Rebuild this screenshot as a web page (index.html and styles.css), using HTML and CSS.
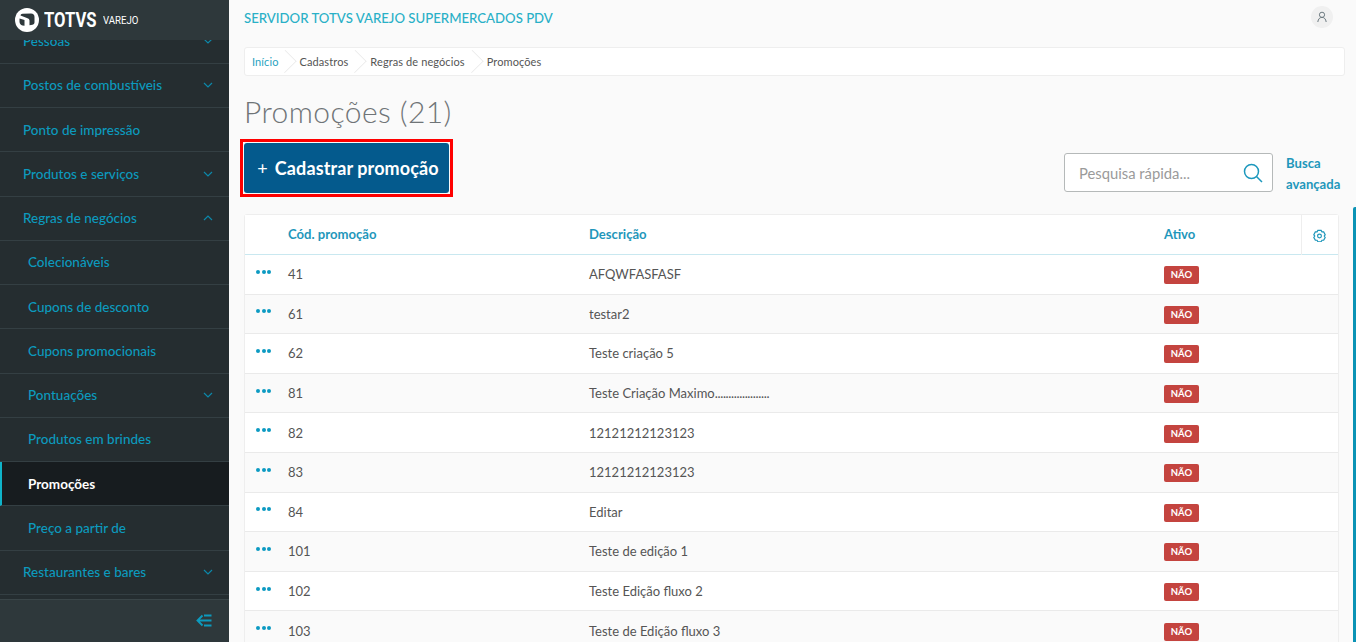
FILE: index.html
```html
<!DOCTYPE html>
<html lang="pt-BR">
<head>
<meta charset="utf-8">
<title>Promoções</title>
<link rel="stylesheet" href="styles.css">
</head>
<body>
<div class="app">
  <aside class="sidebar">
    <div class="brand">
      <svg class="logo" width="26" height="26" viewBox="0 0 26 26"><circle cx="13" cy="13" r="12" fill="#fff"/><path d="M6.500 8.500Q6.500 7 8.500 6.800L17 6.400Q20.500 6.600 20.500 10V15.500Q20.500 17.500 18.500 17.800L15.500 18.200 15.500 13.500Q15.500 11.800 13.500 11.300Z" fill="#2e383b"/><path d="M5.500 11.500 10.500 13V18.800L8.500 18.500Q5.500 17.500 5.500 14.500Z" fill="#2e383b"/></svg>
      <span class="brand-name">TOTVS</span><span class="brand-sub">VAREJO</span>
    </div>
    <nav class="menu">
      <ul class="menu-list">
        <li class="item"><span>Pessoas</span><svg class="chev" viewBox="0 0 10 6"><path d="M1 1l4 4 4-4"/></svg></li>
        <li class="item"><span>Postos de combustíveis</span><svg class="chev" viewBox="0 0 10 6"><path d="M1 1l4 4 4-4"/></svg></li>
        <li class="item"><span>Ponto de impressão</span></li>
        <li class="item"><span>Produtos e serviços</span><svg class="chev" viewBox="0 0 10 6"><path d="M1 1l4 4 4-4"/></svg></li>
        <li class="item"><span>Regras de negócios</span><svg class="chev" viewBox="0 0 10 6"><path d="M1 5l4-4 4 4"/></svg></li>
        <li class="item sub"><span>Colecionáveis</span></li>
        <li class="item sub"><span>Cupons de desconto</span></li>
        <li class="item sub"><span>Cupons promocionais</span></li>
        <li class="item sub"><span>Pontuações</span><svg class="chev" viewBox="0 0 10 6"><path d="M1 1l4 4 4-4"/></svg></li>
        <li class="item sub"><span>Produtos em brindes</span></li>
        <li class="item sub active"><span>Promoções</span></li>
        <li class="item sub"><span>Preço a partir de</span></li>
        <li class="item"><span>Restaurantes e bares</span><svg class="chev" viewBox="0 0 10 6"><path d="M1 1l4 4 4-4"/></svg></li>
      </ul>
    </nav>
    <div class="side-foot">
      <svg class="collapse" width="16" height="13" viewBox="0 0 16 13"><path d="M6.500 1.500 1.500 6.500l5 5M2 6.500h13.500M8 1.500h7.500M8 11.500h7.500"/></svg>
    </div>
  </aside>
  <main class="main">
    <header class="topbar">
      <span class="server">SERVIDOR TOTVS VAREJO SUPERMERCADOS PDV</span>
      <span class="avatar"><svg width="12" height="12" viewBox="0 0 12 12"><circle cx="6" cy="3.800" r="2.600"/><path d="M1.800 11c.4-3 1.900-4.600 4.200-4.600s3.800 1.600 4.200 4.600"/></svg></span>
    </header>
    <div class="crumbs">
      <span class="crumb first">Início</span>
      <span class="crumb">Cadastros</span>
      <span class="crumb">Regras de negócios</span>
      <span class="crumb last">Promoções</span>
    </div>
    <h1 class="title">Promoções (21)</h1>
    <div class="actions">
      <div class="btn-frame"><button class="btn"><span class="plus">+</span>Cadastrar promoção</button></div>
      <div class="search-wrap">
        <div class="search">
          <span class="ph">Pesquisa rápida...</span>
          <svg width="20" height="20" viewBox="0 0 20 20"><circle cx="8.500" cy="8.500" r="7"/><path d="M13.500 13.500 19 19"/></svg>
        </div>
        <a class="adv">Busca<br>avançada</a>
      </div>
    </div>
    <section class="table">
      <div class="row head">
        <span></span><span>Cód. promoção</span><span>Descrição</span><span>Ativo</span>
        <span class="gear"><svg width="13" height="13" viewBox="0 0 24 24"><path d="M9 2.500h6l1.500 2.800 3.200.1 2.800 5.100-1.700 2.500 1.700 2.600-2.800 5-3.200.1L15 23.500H9l-1.500-2.800-3.200-.1-2.800-5 1.700-2.600-1.700-2.500 2.800-5.100 3.200-.1z"/><circle cx="12" cy="13" r="3.500"/></svg></span>
      </div>
      <div class="row"><span class="dots"><i></i><i></i><i></i></span><span>41</span><span>AFQWFASFASF</span><span><b class="tag">NÃO</b></span><span></span></div>
      <div class="row"><span class="dots"><i></i><i></i><i></i></span><span>61</span><span>testar2</span><span><b class="tag">NÃO</b></span><span></span></div>
      <div class="row"><span class="dots"><i></i><i></i><i></i></span><span>62</span><span>Teste criação 5</span><span><b class="tag">NÃO</b></span><span></span></div>
      <div class="row"><span class="dots"><i></i><i></i><i></i></span><span>81</span><span>Teste Criação Maximo<span class="tight">....................</span></span><span><b class="tag">NÃO</b></span><span></span></div>
      <div class="row"><span class="dots"><i></i><i></i><i></i></span><span>82</span><span>12121212123123</span><span><b class="tag">NÃO</b></span><span></span></div>
      <div class="row"><span class="dots"><i></i><i></i><i></i></span><span>83</span><span>12121212123123</span><span><b class="tag">NÃO</b></span><span></span></div>
      <div class="row"><span class="dots"><i></i><i></i><i></i></span><span>84</span><span>Editar</span><span><b class="tag">NÃO</b></span><span></span></div>
      <div class="row"><span class="dots"><i></i><i></i><i></i></span><span>101</span><span>Teste de edição 1</span><span><b class="tag">NÃO</b></span><span></span></div>
      <div class="row"><span class="dots"><i></i><i></i><i></i></span><span>102</span><span>Teste Edição fluxo 2</span><span><b class="tag">NÃO</b></span><span></span></div>
      <div class="row"><span class="dots"><i></i><i></i><i></i></span><span>103</span><span>Teste de Edição fluxo 3</span><span><b class="tag">NÃO</b></span><span></span></div>
    </section>
  </main>
  <div class="scroll-thumb"></div>
</div>
</body>
</html>
```

FILE: styles.css
```css
* { box-sizing: border-box; }
html, body { margin: 0; height: 100%; overflow: hidden; }
body { font-family: "Lato", "Noto Sans", sans-serif; background: #fafafa; color: #4a4a4a; }

.app { display: flex; height: 642px; overflow: hidden; position: relative; }

.sidebar { width: 229px; flex: none; display: flex; flex-direction: column; background: #252d30; }
.brand { height: 40px; flex: none; background: #2e383b; display: flex; align-items: center; padding-left: 14px; color: #fff; position: relative; z-index: 1; }
.logo { flex: none; margin-right: 4px; }
.brand-name { font: 700 20px/1 "Roboto", sans-serif; transform: scaleX(.83); transform-origin: left; width: 52px; flex: none; }
.brand-sub { font: 400 10.500px/1 "Roboto", sans-serif; margin-left: 7px; margin-top: 2px; transform: scaleX(.92); transform-origin: left; }

.menu { flex: 1; overflow: hidden; min-height: 0; }
.menu-list { list-style: none; margin: -20.500px 0 0; padding: 0; }
.item { height: 44.250px; display: flex; align-items: center; justify-content: space-between; padding: 0 16px 0 23px; border-bottom: 1px solid #343f43; color: #0c9abe; font-size: 13.500px; font-weight: 500; }
.item.sub { padding-left: 28px; }
.item.active { background: #171c1f; color: #fff; font-weight: 700; border-left: 2px solid #0fb3c9; padding-left: 26px; }
.chev { width: 10px; height: 6px; fill: none; stroke: #0c88aa; stroke-width: 1.200; }

.side-foot { height: 43px; flex: none; background: #2e383b; border-top: 1px solid #3a4548; display: flex; align-items: center; justify-content: flex-end; padding: 0 17px 2px 0; }
.collapse { fill: none; stroke: #0c9abe; stroke-width: 1.900; }

.main { flex: 1; min-width: 0; padding: 0 11px 0 15px; }
.topbar { height: 47px; display: flex; align-items: center; justify-content: space-between; padding-bottom: 11px; }
.server { color: #29b0c7; font-size: 13.200px; font-weight: 500; }
.avatar { width: 22px; height: 22px; border-radius: 50%; background: #f0f0f0; display: flex; align-items: center; justify-content: center; margin-bottom: 3px; margin-right: 12px; }
.avatar svg { fill: none; stroke: #6d7a80; stroke-width: 1; }

.crumbs { height: 29px; background: #fff; border: 1px solid #eee; border-radius: 3px; display: flex; align-items: stretch; font-size: 11px; letter-spacing: .1px; color: #555; overflow: hidden; }
.crumb { display: flex; align-items: center; padding: 0 11px; position: relative; }
.crumb::after { content: ""; position: absolute; right: -6px; top: 3px; width: 19px; height: 20px; transform: rotate(45deg) scale(.8); border-top: 1px solid #e9e9e9; border-right: 1px solid #e9e9e9; }
.crumb.last::after { display: none; }
.crumb.first { color: #29a3bf; padding-left: 7px; padding-right: 10px; }

.title { margin: 15px 0 0; font-size: 30px; line-height: 40px; font-weight: 300; color: #6f7477; letter-spacing: .42px; }

.actions { display: flex; justify-content: space-between; align-items: flex-start; margin-top: 8px; margin-left: -4px; }
.btn-frame { border: 3px solid #f00; padding: 1px; height: 58px; flex: none; }
.btn { height: 50px; width: 205px; border: 0; border-radius: 3px; background: #045a8d; color: #fff; font: 700 18px/1 "Lato", sans-serif; letter-spacing: .1px; display: flex; align-items: center; justify-content: center; padding: 0 0 0 3px; }
.plus { font-weight: 400; font-size: 18px; margin-right: 7px; }
.search-wrap { display: flex; align-items: flex-start; margin-top: 14px; }
.search { width: 209px; height: 39px; background: #fff; border: 1px solid #b5b9b9; border-radius: 3px; display: flex; align-items: center; justify-content: space-between; padding: 0 9px 0 14px; }
.search svg { fill: none; stroke: #1c98bd; stroke-width: 1.500; }
.ph { color: #9a9a9a; font-size: 14.800px; }
.adv { color: #1f97bb; font-size: 13.100px; font-weight: 700; line-height: 21px; width: 59px; margin-left: 13px; display: block; white-space: nowrap; }

.table { margin-top: 17px; margin-right: 6px; background: #fff; border: 1px solid #eee; border-radius: 3px 3px 0 0; }
.row { display: grid; grid-template-columns: 43px 301px 575px 137px 1fr; height: 39.600px; align-items: center; border-bottom: 1px solid #eaeaea; font-size: 13px; color: #555; }
.row:nth-child(odd) { background: #fafafa; }
.row.head { background: #fff; height: 40px; padding-bottom: 2px; border-bottom: 1px solid #c9e8f0; color: #1f97bb; font-size: 13.100px; font-weight: 700; }
.gear { height: 40px; margin-bottom: -2px; border-left: 1px solid #eee; display: flex; align-items: center; justify-content: center; padding-right: 1px; }
.gear svg { fill: none; stroke: #1f97bb; stroke-width: 2.200; }
.dots { display: flex; gap: 1.500px; padding-left: 11px; margin-top: -5px; }
.dots i { width: 4px; height: 4px; border-radius: 50%; background: #0c9ac2; }
.tag { display: inline-block; width: 35px; height: 18px; line-height: 18px; text-align: center; background: #c4443f; color: #fff; font-size: 9.500px; font-weight: 700; border-radius: 2px; vertical-align: middle; margin-top: 2px; }
.tight { letter-spacing: -.35px; }

.scroll-thumb { position: absolute; right: 0; top: 207px; bottom: 0; width: 3px; background: #0b93b5; border-radius: 2px 0 0 0; }
```
